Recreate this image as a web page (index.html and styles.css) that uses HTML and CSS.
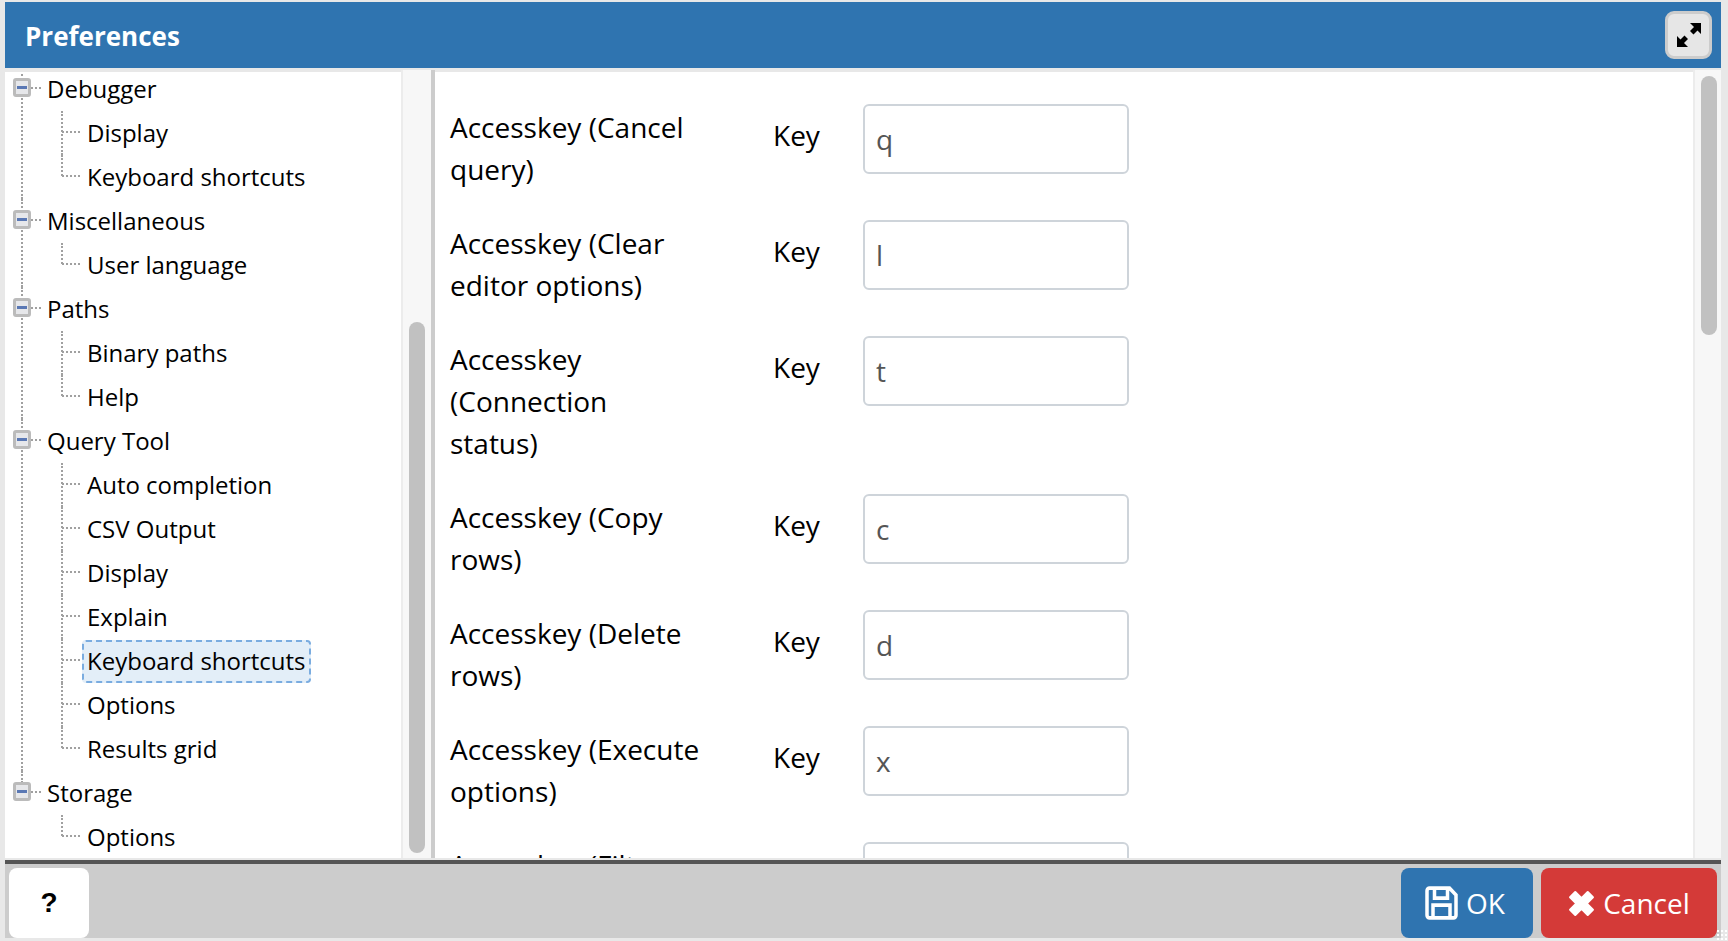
FILE: index.html
```html
<!DOCTYPE html>
<html lang="en">
<head>
    <meta charset="UTF-8">
    <title>Preferences</title>
    <link rel="stylesheet" href="styles.css">
</head>
<body>
    <div class="dialog">
        <div class="dialog-header">
            <span class="dialog-title">Preferences</span>
            <button class="maximize-btn" type="button" aria-label="Maximize">
                <svg width="26" height="26" viewBox="0 0 26 26"><path d="M25 1v11l-3.500-3.500-4 4-3.500-3.500 4-4L14 1zM1 25V14l3.500 3.500 4-4 3.500 3.500-4 4L12 25z" fill="#000"/></svg>
            </button>
        </div>

        <div class="dialog-body">
            <!-- Preference tree -->
            <div class="tree-panel">
                <ul class="tree">
                    <li class="tree-group">
                        <div class="group-row"><span class="toggle"></span>Debugger</div>
                        <ul>
                            <li class="leaf-row"><span class="leaf-label">Display</span></li>
                            <li class="leaf-row"><span class="leaf-label">Keyboard shortcuts</span></li>
                        </ul>
                    </li>
                    <li class="tree-group">
                        <div class="group-row"><span class="toggle"></span>Miscellaneous</div>
                        <ul>
                            <li class="leaf-row"><span class="leaf-label">User language</span></li>
                        </ul>
                    </li>
                    <li class="tree-group">
                        <div class="group-row"><span class="toggle"></span>Paths</div>
                        <ul>
                            <li class="leaf-row"><span class="leaf-label">Binary paths</span></li>
                            <li class="leaf-row"><span class="leaf-label">Help</span></li>
                        </ul>
                    </li>
                    <li class="tree-group">
                        <div class="group-row"><span class="toggle"></span>Query Tool</div>
                        <ul>
                            <li class="leaf-row"><span class="leaf-label">Auto completion</span></li>
                            <li class="leaf-row"><span class="leaf-label">CSV Output</span></li>
                            <li class="leaf-row"><span class="leaf-label">Display</span></li>
                            <li class="leaf-row"><span class="leaf-label">Explain</span></li>
                            <li class="leaf-row"><span class="leaf-label selected">Keyboard shortcuts</span></li>
                            <li class="leaf-row"><span class="leaf-label">Options</span></li>
                            <li class="leaf-row"><span class="leaf-label">Results grid</span></li>
                        </ul>
                    </li>
                    <li class="tree-group last">
                        <div class="group-row"><span class="toggle"></span>Storage</div>
                        <ul>
                            <li class="leaf-row"><span class="leaf-label">Options</span></li>
                        </ul>
                    </li>
                </ul>
            </div>
            <div class="scroll-track tree-track"><div class="scroll-thumb"></div></div>
            <div class="splitter"></div>

            <!-- Settings form -->
            <div class="form-panel">
                <div class="form-rows">
                    <div class="form-row">
                        <div class="row-label">Accesskey (Cancel query)</div>
                        <div class="row-key">Key</div>
                        <input class="key-input" type="text" value="q">
                    </div>
                    <div class="form-row">
                        <div class="row-label">Accesskey (Clear editor options)</div>
                        <div class="row-key">Key</div>
                        <input class="key-input" type="text" value="l">
                    </div>
                    <div class="form-row">
                        <div class="row-label">Accesskey (Connection status)</div>
                        <div class="row-key">Key</div>
                        <input class="key-input" type="text" value="t">
                    </div>
                    <div class="form-row">
                        <div class="row-label">Accesskey (Copy rows)</div>
                        <div class="row-key">Key</div>
                        <input class="key-input" type="text" value="c">
                    </div>
                    <div class="form-row">
                        <div class="row-label">Accesskey (Delete rows)</div>
                        <div class="row-key">Key</div>
                        <input class="key-input" type="text" value="d">
                    </div>
                    <div class="form-row">
                        <div class="row-label">Accesskey (Execute options)</div>
                        <div class="row-key">Key</div>
                        <input class="key-input" type="text" value="x">
                    </div>
                    <div class="form-row">
                        <div class="row-label">Accesskey (Filter dialog)</div>
                        <div class="row-key">Key</div>
                        <input class="key-input" type="text" value="f">
                    </div>
                </div>
            </div>
            <div class="scroll-track form-track"><div class="scroll-thumb"></div></div>
        </div>

        <div class="dialog-footer">
            <button class="btn btn-help" type="button">?</button>
            <div class="footer-actions">
                <button class="btn btn-ok" type="button">
                    <svg width="33" height="34" viewBox="0 0 33 32" preserveAspectRatio="none"><path d="M2 4.500A2.500 2.500 0 0 1 4.500 2h20L31 8.500v19a2.500 2.500 0 0 1-2.500 2.500h-24A2.500 2.500 0 0 1 2 27.500zM9.500 2v9.500h13V2M8 30V18h17v12" fill="none" stroke="#fff" stroke-width="3.500"/></svg>
                    OK
                </button>
                <button class="btn btn-cancel" type="button">
                    <svg width="27" height="27" viewBox="0 0 26 26"><path d="M7 2l6 6 6-6 5 5-6 6 6 6-5 5-6-6-6 6-5-5 6-6-6-6z" fill="#fff" stroke="#fff" stroke-width="2" stroke-linejoin="round"/></svg>
                    Cancel
                </button>
            </div>
        </div>
    </div>
    <div class="resize-grip"></div>
</body>
</html>
```

FILE: styles.css
```css
* {
    box-sizing: border-box;
}
html, body {
    height: 100%;
}
body {
    margin: 0;
    background-color: #e8e8e8;
    font-family: "Open Sans", sans-serif;
    font-size: 24px;
    color: #000;
    overflow: hidden;
}
.dialog {
    display: flex;
    flex-direction: column;
    width: 1716px;
    height: 936px;
    margin: 2px 0 0 5px;
}
.dialog-header {
    display: flex;
    align-items: center;
    justify-content: space-between;
    flex: 0 0 66px;
    padding: 0 9px 0 20px;
    background-color: #2f74b0;
}
.dialog-title {
    margin-top: 2px;
    color: #fff;
    font-size: 26px;
    font-weight: 700;
}
.maximize-btn {
    display: flex;
    align-items: center;
    justify-content: center;
    width: 47px;
    height: 48px;
    padding: 0;
    background-color: #e6e6e6;
    border: 3px solid #ccc;
    border-radius: 9px;
}
.dialog-body {
    display: flex;
    flex: 1;
    min-height: 0;
    margin-top: 2px;
    padding-bottom: 2px;
}

/* tree */
.tree-panel {
    flex: 0 0 396px;
    margin-top: 2px;
    background-color: #fff;
    overflow: hidden;
}
.tree {
    margin: -5px 0 0;
    padding: 0;
    list-style: none;
}
.tree ul {
    margin: 0;
    padding: 0;
    list-style: none;
}
.tree-group {
    position: relative;
}
.tree-group::before {
    content: "";
    position: absolute;
    left: 16px;
    top: 0;
    bottom: 0;
    border-left: 2px dotted #a0a0a0;
}
.tree-group.last::before {
    bottom: auto;
    height: 12px;
}
.group-row {
    position: relative;
    display: flex;
    align-items: center;
    height: 44px;
    padding: 0 0 2px 42px;
}
.group-row::after {
    content: "";
    position: absolute;
    left: 26px;
    top: 20px;
    width: 10px;
    border-top: 2px dotted #a0a0a0;
}
.toggle {
    position: absolute;
    left: 8px;
    top: 11px;
    z-index: 1;
    width: 18px;
    height: 19px;
    background-color: #e6e7ea;
    border: 3px solid #bbb;
    border-radius: 3px;
}
.toggle::after {
    content: "";
    position: absolute;
    left: 1px;
    top: 5px;
    width: 10px;
    height: 3px;
    background-color: #5a78b4;
}
.leaf-row {
    position: relative;
    display: flex;
    align-items: flex-end;
    height: 44px;
    padding-left: 77px;
}
.leaf-row::before {
    content: "";
    position: absolute;
    left: 56px;
    top: 0;
    bottom: 0;
    border-left: 2px dotted #a0a0a0;
}
.leaf-row:last-child::before {
    bottom: 23px;
}
.leaf-row::after {
    content: "";
    position: absolute;
    left: 57px;
    top: 20px;
    width: 18px;
    border-top: 2px dotted #a0a0a0;
}
.leaf-label {
    display: inline-block;
    padding: 0 3px 1px 3px;
    border: 2px solid transparent;
    border-radius: 4px;
    line-height: 38px;
}
.leaf-label.selected {
    background-color: #e3eef8;
    border: 2px dashed #7aace0;
}

/* scrollbars */
.scroll-track {
    position: relative;
    flex: 0 0 30px;
    background-color: #f7f7f7;
    border-left: 2px solid #ececec;
}
.form-track {
    flex-basis: 28px;
}
.scroll-thumb {
    position: absolute;
    width: 16px;
    background-color: #c1c1c1;
    border-radius: 8px;
}
.tree-track .scroll-thumb {
    left: 6px;
    top: 252px;
    height: 531px;
}
.form-track .scroll-thumb {
    left: 6px;
    top: 6px;
    height: 259px;
}
.splitter {
    flex: 0 0 4px;
    background-color: #ccc;
}

/* form */
.form-panel {
    flex: 1;
    min-width: 0;
    margin-top: 2px;
    background-color: #fff;
    overflow: hidden;
}
.form-rows {
    padding: 32px 0 0 15px;
}
.form-row {
    display: grid;
    grid-template-columns: 323px 90px 266px;
    align-items: start;
    padding-bottom: 30px;
    font-size: 28px;
}
.row-label {
    padding-right: 72px;
    line-height: 42px;
    margin-top: 2px;
}
.row-key {
    line-height: 42px;
    margin-top: 10px;
}
.key-input {
    width: 266px;
    height: 70px;
    padding: 0 11px;
    background-color: #fff;
    border: 2px solid #ced4da;
    border-radius: 6px;
    color: #555;
    font-family: "Open Sans", sans-serif;
    font-size: 28px;
}

/* footer */
.dialog-footer {
    display: flex;
    align-items: flex-end;
    justify-content: space-between;
    flex: 0 0 78px;
    padding: 0 4px;
    background-color: #ccc;
    border-top: 4px solid #555;
}
.footer-actions {
    display: flex;
    gap: 8px;
}
.btn {
    display: flex;
    align-items: center;
    justify-content: center;
    gap: 8px;
    height: 70px;
    padding: 0;
    border: none;
    border-radius: 8px;
    font-family: "Open Sans", sans-serif;
    font-size: 28px;
    color: #fff;
}
.btn-help {
    width: 80px;
    background-color: #fff;
    color: #000;
    font-family: "Liberation Sans", sans-serif;
    font-size: 28px;
    font-weight: 700;
}
.btn-ok {
    width: 132px;
    padding-right: 4px;
    background-color: #2f74b0;
}
.btn-cancel {
    width: 176px;
    background-color: #d43a38;
}
.resize-grip {
    position: fixed;
    right: 0;
    bottom: 0;
    width: 12px;
    height: 12px;
    background-image: radial-gradient(#fff 1px, transparent 1.500px);
    background-size: 4px 4px;
}
```
